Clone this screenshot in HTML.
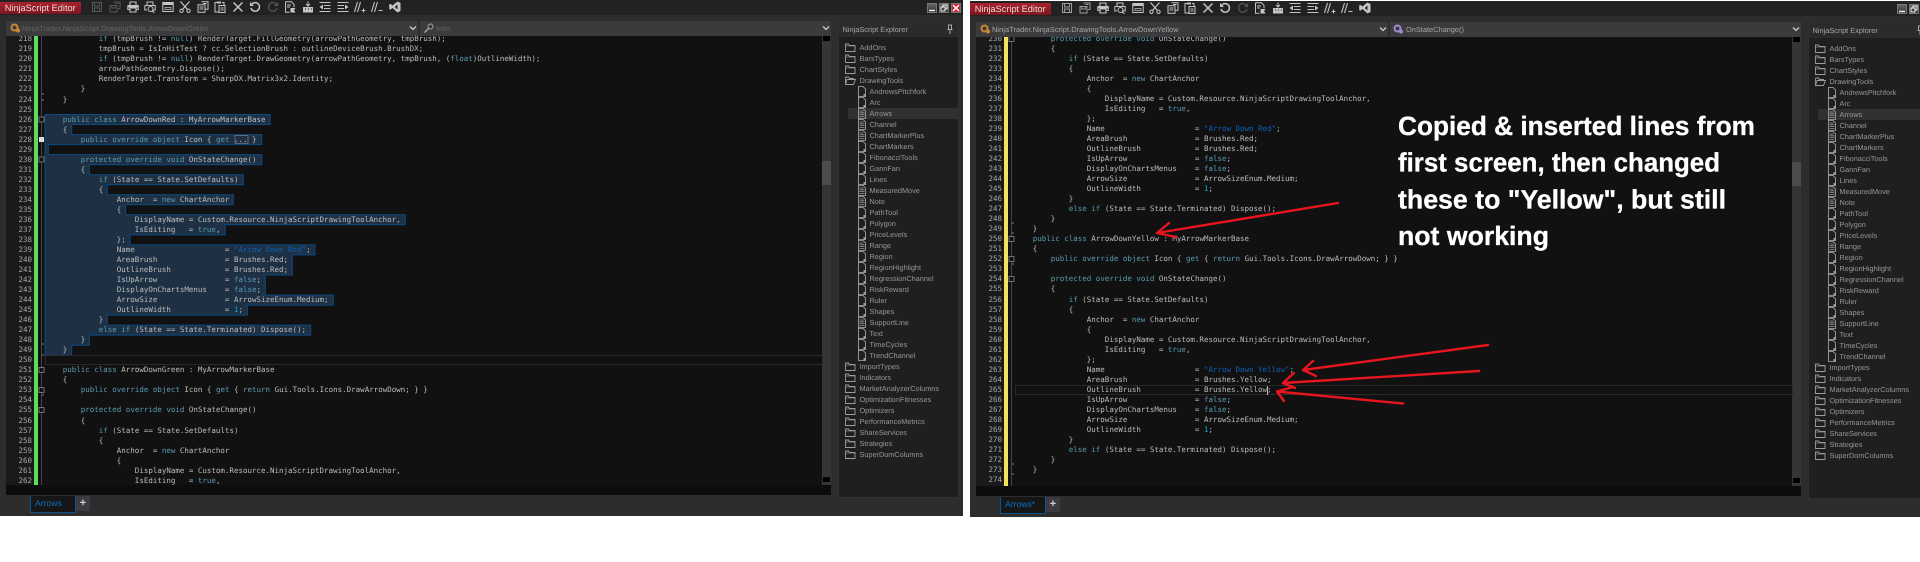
<!DOCTYPE html>
<html>
<head>
<meta charset="utf-8">
<title>NinjaScript Editor</title>
<style>
html,body{margin:0;padding:0;background:#fff;width:1920px;height:562px;overflow:hidden}
*{box-sizing:border-box}
body{position:relative;font-family:"Liberation Sans",sans-serif;text-rendering:geometricPrecision}
.win{position:absolute;width:963px;height:516px;background:#2d2d2d;overflow:hidden;filter:blur(.35px)}
.titlebar{position:absolute;left:0;top:0;width:100%;height:15px;background:#222}
.brand{position:absolute;left:0;top:2px;width:81px;height:12px;background:linear-gradient(#a8212c,#7d1620);color:#ecd9d9;font-size:9.2px;line-height:12px;padding-left:4.7px;white-space:nowrap}
.tb{position:absolute;top:1px;width:12px;height:12px;color:#c4c4c4}
.dim{color:#555}
.mid{color:#9a9a9a}
.wb{position:absolute;top:3px;width:10px;height:10px;border:1px solid #777;background:linear-gradient(#666,#333)}
.combo{position:absolute;top:21px;height:15px;background:#3b3b3d}
.combo span{position:absolute;top:0;font-size:7.4px;line-height:15px;white-space:nowrap}
.chev{position:absolute;top:4px;width:8px;height:7px}
.editor{position:absolute;left:6px;top:36px;width:825px;height:459px;background:#111;overflow:hidden}
.gutter{position:absolute;left:0;top:0;width:28px;height:449px;background:#1a1a1a}
.hbar{position:absolute;left:0;top:449px;width:825px;height:10px;background:#0c0c0c}
.vbar{position:absolute;left:816px;top:0;width:9px;height:449px;background:#353535}
.thumb{position:absolute;left:0;top:125px;width:9px;height:24px;background:#4c4c4c}
.sarrow{position:absolute;left:1px;width:7px;height:5px;background:#000}
.code,.nums{position:absolute;margin:0;font-family:"DejaVu Sans Mono","Liberation Mono",monospace;font-size:7.49px;line-height:10.03px;white-space:pre}
.code{color:#bdbdbd;left:38.7px}
.nums{color:#a8a8a8;left:12px;width:14px;text-align:right}
.bar{position:absolute;left:28px;top:0;width:4px;height:449px}
.k{color:#5b9bb2}
.s{color:#0d62ba}
.n{color:#08a4d8}
.fold{position:absolute;left:0;top:0}
.tabs{position:absolute;left:30px;top:496px;width:46px;height:17px;background:#161616;border:1px solid #0a558f;border-top:0;color:#0a6fc4;font-size:8.6px;line-height:15px;padding-left:4px}
.plus{position:absolute;left:76px;top:496px;width:14px;height:15px;background:#3b3b41;color:#d0d0d0;font-size:11px;font-weight:bold;line-height:14px;text-align:center}
.exp{position:absolute;left:838px;top:20px;width:120.5px;height:478px;background:#1f1f1f;border:1px solid #303030;overflow:hidden}
.exph{position:absolute;left:0;top:0;width:100%;height:16px;background:#2b2b2b;color:#a8a8a8;font-size:7.4px;line-height:17px;padding-left:3.5px}
.tree{position:absolute;left:0;top:20.5px;width:100%}
.r{position:relative;height:11.03px;font-size:7.3px;line-height:11px;color:#989898;white-space:nowrap}
.r svg{position:absolute;top:0;width:11px;height:11px;color:#9c9c9c}
.r b{position:absolute;font-weight:normal}
.f svg{left:6px}.f b{left:20.5px}
.d svg{left:18px}.d b{left:30.5px}
.sel{background:#303030;margin-left:9px}
.sel svg{left:9px}.sel b{left:21.5px}
.overlay{position:absolute;left:0;top:0}
</style>
</head>
<body>
<svg width="0" height="0" style="position:absolute">
<defs>
<symbol id="i-save" viewBox="0 0 12 12"><path d="M1.500 1.500h9v9h-9zM3.500 1.500v3.500h5v-3.500M3.500 10.500v-3.500h5v3.500" fill="none" stroke="currentColor"/></symbol>
<symbol id="i-saveall" viewBox="0 0 12 12"><path d="M4.500 1h6.500v6.500h-2M1 4.500h7v6.500h-7zM2.800 4.500v2.500h3.500v-2.500M6.500 2.500h3" fill="none" stroke="currentColor"/></symbol>
<symbol id="i-print" viewBox="0 0 12 12"><path d="M3 4v-3h6v3M.8 4.500h10.400v4h-2.200M3 8.500h-2.200v-4M3 7h6v4h-6z" fill="none" stroke="currentColor" stroke-width="1.100"/><path d="M1 5h10v1.500h-10z" fill="currentColor"/></symbol>
<symbol id="i-prev" viewBox="0 0 12 12"><path d="M3 4v-3h6v3M.8 4.500h10.400v4.500h-3M3 9h-2.200v-4.500" fill="none" stroke="currentColor"/><circle cx="6.500" cy="8" r="2.500" fill="none" stroke="currentColor"/><path d="M8.300 9.800l2 2" stroke="currentColor" stroke-width="1.200"/></symbol>
<symbol id="i-win" viewBox="0 0 12 12"><path d="M.8 1.500h10.400v9h-10.400z" fill="none" stroke="currentColor"/><path d="M1 2h10v2h-10z" fill="currentColor"/><path d="M3 6.500h6v2h-6z" fill="none" stroke="currentColor" stroke-width=".7"/></symbol>
<symbol id="i-cut" viewBox="0 0 12 12"><path d="M1.500 .5l7 8M10.500 .5l-7 8" fill="none" stroke="currentColor" stroke-width="1.200"/><circle cx="2.500" cy="9.800" r="1.700" fill="none" stroke="currentColor"/><circle cx="9.500" cy="9.800" r="1.700" fill="none" stroke="currentColor"/></symbol>
<symbol id="i-copy" viewBox="0 0 12 12"><path d="M4.500 .8h6.500v7.500h-2.500M1 3.800h7v7.500h-7z" fill="none" stroke="currentColor"/><path d="M2.500 6h4M2.500 8h4M6 2.500h3.500" stroke="currentColor"/></symbol>
<symbol id="i-paste" viewBox="0 0 12 12"><path d="M4 1.500h-3v9.500h3.500M8 1.500h2v3M5 4.500h6v7h-6z" fill="none" stroke="currentColor"/><path d="M3 .5h4v2h-4z" fill="currentColor"/><path d="M6.500 7h3M6.500 9h3" stroke="currentColor"/></symbol>
<symbol id="i-x" viewBox="0 0 12 12"><path d="M1.500 1.500l9 9M10.500 1.500l-9 9" stroke="currentColor" stroke-width="1.500"/></symbol>
<symbol id="i-undo" viewBox="0 0 12 12"><path d="M3 3a4.300 4.300 0 1 1-1 4" fill="none" stroke="currentColor" stroke-width="1.500"/><path d="M1 1v4h4z" fill="currentColor"/></symbol>
<symbol id="i-redo" viewBox="0 0 12 12"><path d="M9 3a4.300 4.300 0 1 0 1 4" fill="none" stroke="currentColor" stroke-width="1.200"/><path d="M11 1v4h-4z" fill="currentColor"/></symbol>
<symbol id="i-snip" viewBox="0 0 12 12"><path d="M1.500 .8h6l2.500 2.500v3M1.500 .8v10.400h4" fill="none" stroke="currentColor"/><path d="M3 4h4M3 6h3" stroke="currentColor"/><path d="M6.500 7h5l-1.500 2 1.500 2.500h-5z" fill="currentColor"/></symbol>
<symbol id="i-imp" viewBox="0 0 12 12"><path d="M1 6h10v5.500h-10z" fill="currentColor"/><path d="M6 .5v4M4 3l2 2 2-2" fill="none" stroke="currentColor"/><path d="M3 8h1M6 8h1M9 8h1" stroke="#222"/></symbol>
<symbol id="i-ind" viewBox="0 0 12 12"><path d="M.5 1.500h11M5 4.500h6.500M5 7.500h6.500M.5 10.500h11" stroke="currentColor"/><path d="M4 3.500v5l-3.500-2.500z" fill="currentColor"/></symbol>
<symbol id="i-out" viewBox="0 0 12 12"><path d="M.5 1.500h11M.5 4.500h6.500M.5 7.500h6.500M.5 10.500h11" stroke="currentColor"/><path d="M8 3.500v5l3.500-2.500z" fill="currentColor"/></symbol>
<symbol id="i-com" viewBox="0 0 12 12"><path d="M3.500 1l-3 10M6.500 1l-3 10" stroke="currentColor" stroke-width="1.100"/><path d="M7.500 9.500h4M9.500 7.500v4" stroke="currentColor"/></symbol>
<symbol id="i-unc" viewBox="0 0 12 12"><path d="M3.500 1l-3 10M6.500 1l-3 10" stroke="currentColor" stroke-width="1.100"/><path d="M7.500 9.500h4" stroke="currentColor"/></symbol>
<symbol id="i-vs" viewBox="0 0 12 12"><path d="M8.500 .5l3 1.500v8l-3 1.500-5-4.500-2.300 1.700-1-.7v-4.500l1-.7 2.300 1.700zM8.500 3.500l-2.700 2.500 2.700 2.500z" fill="currentColor" fill-rule="evenodd"/></symbol>
<symbol id="i-folder" viewBox="0 0 11 11"><path d="M.5 2v7.500h9.500v-6h-5.500l-1-1.500z" fill="none" stroke="currentColor" stroke-width=".9"/><path d="M.5 4h9.500" stroke="currentColor" stroke-width=".6"/></symbol>
<symbol id="i-open" viewBox="0 0 11 11"><path d="M.5 2v7.500h8l2-5h-8.500l-1.500 5M8.500 4.500v-1h-4l-1-1.500h-3" fill="none" stroke="currentColor" stroke-width=".9"/></symbol>
<symbol id="i-page" viewBox="0 0 11 11"><path d="M1.500 .4h4.500l2.500 2.500v7.700h-7z" fill="none" stroke="currentColor" stroke-width=".9"/><path d="M6.500 8h2.500v2.500h-2.500z" fill="currentColor"/></symbol>
<symbol id="i-text" viewBox="0 0 11 11"><path d="M1.500 .4h4.500l2.500 2.500v7.700h-7z" fill="none" stroke="currentColor" stroke-width=".9"/><path d="M2.500 3h4M2.500 4.800h5M2.500 6.600h5M2.500 8.400h5" stroke="currentColor" stroke-width=".8"/></symbol>
</defs>
</svg>

<!-- LEFT WINDOW -->
<div class="win" style="left:0;top:0">
<div class="titlebar"></div>
<div class="brand">NinjaScript Editor</div>
<svg class="tb dim" style="left:91px"><use href="#i-save"/></svg>
<svg class="tb dim" style="left:109px"><use href="#i-saveall"/></svg>
<svg class="tb" style="left:126.500px"><use href="#i-print"/></svg>
<svg class="tb" style="left:144px"><use href="#i-prev"/></svg>
<svg class="tb" style="left:162px"><use href="#i-win"/></svg>
<svg class="tb" style="left:179px"><use href="#i-cut"/></svg>
<svg class="tb" style="left:197px"><use href="#i-copy"/></svg>
<svg class="tb" style="left:214px"><use href="#i-paste"/></svg>
<svg class="tb" style="left:232px"><use href="#i-x"/></svg>
<svg class="tb" style="left:249px"><use href="#i-undo"/></svg>
<svg class="tb dim" style="left:267px"><use href="#i-redo"/></svg>
<svg class="tb" style="left:284px"><use href="#i-snip"/></svg>
<svg class="tb" style="left:302px"><use href="#i-imp"/></svg>
<svg class="tb" style="left:319px"><use href="#i-ind"/></svg>
<svg class="tb" style="left:337px"><use href="#i-out"/></svg>
<svg class="tb" style="left:354px"><use href="#i-com"/></svg>
<svg class="tb" style="left:371px"><use href="#i-unc"/></svg>
<svg class="tb" style="left:389px"><use href="#i-vs"/></svg>
<div class="wb" style="left:926.500px"><svg width="8" height="8" style="display:block"><path d="M1 6.500h6" stroke="#eee" stroke-width="1.500"/></svg></div>
<div class="wb" style="left:938.500px"><svg width="8" height="8" style="display:block"><path d="M1 3h4v4h-4zM3 3v-2h4v4h-2" fill="none" stroke="#eee"/></svg></div>
<div class="wb" style="left:950.500px;background:#c8262e"><svg width="8" height="8" style="display:block"><path d="M1 1l6 6M7 1l-6 6" stroke="#fff" stroke-width="1.500"/></svg></div>

<div class="combo" style="left:6px;width:412px">
<svg style="position:absolute;left:4px;top:2px" width="11" height="11"><circle cx="4.500" cy="4.500" r="3" fill="none" stroke="#c98a32" stroke-width="2"/><circle cx="8" cy="7.500" r="2" fill="#c98a32"/></svg>
<span style="left:16px;color:#666;letter-spacing:.06px">NinjaTrader.NinjaScript.DrawingTools.ArrowDownGreen</span>
<svg class="chev" style="left:403px"><path d="M1 1.500l3 3 3-3" fill="none" stroke="#ccc" stroke-width="1.300"/></svg>
</div>
<div class="combo" style="left:420px;width:411px">
<svg style="position:absolute;left:3px;top:2px" width="11" height="11"><circle cx="7.500" cy="3.500" r="2.500" fill="none" stroke="#aaa"/><path d="M5.500 5.500l-4 4" stroke="#aaa" stroke-width="1.300"/></svg>
<span style="left:16px;color:#666">Icon</span>
<svg class="chev" style="left:402px"><path d="M1 1.500l3 3 3-3" fill="none" stroke="#ccc" stroke-width="1.300"/></svg>
</div>

<div class="editor">
<div class="gutter"></div>
<div class="bar" style="background:#5fdc5a"></div>
<div class="vbar"><div class="thumb"></div><div class="sarrow" style="top:0"></div><div class="sarrow" style="top:441px"></div></div>
<div class="hbar"></div>
<svg class="fold" style="left:-6px;top:-36px;overflow:visible;height:485px;width:831px">
<path d="M41.500 36v449" stroke="#444" stroke-width="1"/>
<polygon points="45,114.500 270,114.500 270,124.500 71.700,124.500 71.700,134.600 261.700,134.600 261.700,144.600 48.300,144.600 48.300,154.600 261.700,154.600 261.700,164.700 89.300,164.700 89.300,174.700 243.300,174.700 243.300,184.700 107.300,184.700 107.300,194.700 233.300,194.700 233.300,204.800 125.700,204.800 125.700,214.800 405.300,214.800 405.300,224.800 225,224.800 225,234.900 130,234.900 130,244.900 315,244.900 315,254.900 292.300,254.900 292.300,275 265.300,275 265.300,295 333.300,295 333.300,305.100 247.300,305.100 247.300,315.100 107.300,315.100 107.300,325.100 310.700,325.100 310.700,335.100 89.300,335.100 89.300,345.200 71.700,345.200 71.700,355.200 45,355.200" fill="#1e3044" stroke="#0c4a82" stroke-width="1"/>
<rect x="45.500" y="355.500" width="777" height="9" fill="none" stroke="#2a2a2a"/>
<rect x="235" y="135.500" width="13" height="8" fill="none" stroke="#667"/>
<g fill="#111" stroke="#888" stroke-width=".8">
<rect x="39" y="117" width="5" height="5"/><rect x="39" y="157" width="5" height="5"/>
<rect x="39" y="367.500" width="5" height="5"/><rect x="39" y="387.500" width="5" height="5"/><rect x="39" y="407.500" width="5" height="5"/>
</g>
<rect x="39" y="137" width="5" height="5" fill="#ddd"/>
<path d="M41.500 94h2.500M41.500 100h2.500M41.500 344h2.500M41.500 355h2.500M41.500 395h2.500" stroke="#777"/>
</svg>
<pre class="nums" style="top:-1.700px">218
219
220
221
222
223
224
225
226
227
228
229
230
231
232
233
234
235
236
237
238
239
240
241
242
243
244
245
246
247
248
249
250
251
252
253
254
255
256
257
258
259
260
261
262</pre>
<pre class="code" style="top:-1.700px">            <span class="k">if</span> (tmpBrush != <span class="k">null</span>) RenderTarget.FillGeometry(arrowPathGeometry, tmpBrush);
            tmpBrush = IsInHitTest ? cc.SelectionBrush : outlineDeviceBrush.BrushDX;
            <span class="k">if</span> (tmpBrush != <span class="k">null</span>) RenderTarget.DrawGeometry(arrowPathGeometry, tmpBrush, (<span class="k">float</span>)OutlineWidth);
            arrowPathGeometry.Dispose();
            RenderTarget.Transform = SharpDX.Matrix3x2.Identity;
        }
    }

    <span class="k">public class</span> ArrowDownRed : MyArrowMarkerBase
    {
        <span class="k">public override object</span> Icon { <span class="k">get</span> ... }

        <span class="k">protected override void</span> OnStateChange()
        {
            <span class="k">if</span> (State == State.SetDefaults)
            {
                Anchor  = <span class="k">new</span> ChartAnchor
                {
                    DisplayName = Custom.Resource.NinjaScriptDrawingToolAnchor,
                    IsEditing   = <span class="k">true</span>,
                };
                Name                    = <span class="s">"Arrow Down Red"</span>;
                AreaBrush               = Brushes.Red;
                OutlineBrush            = Brushes.Red;
                IsUpArrow               = <span class="k">false</span>;
                DisplayOnChartsMenus    = <span class="k">false</span>;
                ArrowSize               = ArrowSizeEnum.Medium;
                OutlineWidth            = <span class="n">1</span>;
            }
            <span class="k">else if</span> (State == State.Terminated) Dispose();
        }
    }

    <span class="k">public class</span> ArrowDownGreen : MyArrowMarkerBase
    {
        <span class="k">public override object</span> Icon { <span class="k">get</span> { <span class="k">return</span> Gui.Tools.Icons.DrawArrowDown; } }

        <span class="k">protected override void</span> OnStateChange()
        {
            <span class="k">if</span> (State == State.SetDefaults)
            {
                Anchor  = <span class="k">new</span> ChartAnchor
                {
                    DisplayName = Custom.Resource.NinjaScriptDrawingToolAnchor,
                    IsEditing   = <span class="k">true</span>,</pre>
</div>

<div class="tabs">Arrows</div>
<div class="plus">+</div>

<div class="exp">
<div class="exph">NinjaScript Explorer</div>
<svg style="position:absolute;left:107px;top:3px" width="8" height="11"><path d="M2.500 1h3v4.500h-3zM1.500 5.500h5M4 5.500v4.500" fill="none" stroke="#aaa"/></svg>
<div class="tree">
<div class="r f"><svg><use href="#i-folder"/></svg><b>AddOns</b></div>
<div class="r f"><svg><use href="#i-folder"/></svg><b>BarsTypes</b></div>
<div class="r f"><svg><use href="#i-folder"/></svg><b>ChartStyles</b></div>
<div class="r f"><svg><use href="#i-open"/></svg><b>DrawingTools</b></div>
<div class="r d"><svg><use href="#i-page"/></svg><b>AndrewsPitchfork</b></div>
<div class="r d"><svg><use href="#i-page"/></svg><b>Arc</b></div>
<div class="r sel"><svg><use href="#i-text"/></svg><b>Arrows</b></div>
<div class="r d"><svg><use href="#i-text"/></svg><b>Channel</b></div>
<div class="r d"><svg><use href="#i-text"/></svg><b>ChartMarkerPlus</b></div>
<div class="r d"><svg><use href="#i-page"/></svg><b>ChartMarkers</b></div>
<div class="r d"><svg><use href="#i-page"/></svg><b>FibonacciTools</b></div>
<div class="r d"><svg><use href="#i-page"/></svg><b>GannFan</b></div>
<div class="r d"><svg><use href="#i-page"/></svg><b>Lines</b></div>
<div class="r d"><svg><use href="#i-text"/></svg><b>MeasuredMove</b></div>
<div class="r d"><svg><use href="#i-text"/></svg><b>Note</b></div>
<div class="r d"><svg><use href="#i-page"/></svg><b>PathTool</b></div>
<div class="r d"><svg><use href="#i-page"/></svg><b>Polygon</b></div>
<div class="r d"><svg><use href="#i-page"/></svg><b>PriceLevels</b></div>
<div class="r d"><svg><use href="#i-text"/></svg><b>Range</b></div>
<div class="r d"><svg><use href="#i-page"/></svg><b>Region</b></div>
<div class="r d"><svg><use href="#i-page"/></svg><b>RegionHighlight</b></div>
<div class="r d"><svg><use href="#i-page"/></svg><b>RegressionChannel</b></div>
<div class="r d"><svg><use href="#i-page"/></svg><b>RiskReward</b></div>
<div class="r d"><svg><use href="#i-page"/></svg><b>Ruler</b></div>
<div class="r d"><svg><use href="#i-page"/></svg><b>Shapes</b></div>
<div class="r d"><svg><use href="#i-text"/></svg><b>SupportLine</b></div>
<div class="r d"><svg><use href="#i-page"/></svg><b>Text</b></div>
<div class="r d"><svg><use href="#i-page"/></svg><b>TimeCycles</b></div>
<div class="r d"><svg><use href="#i-page"/></svg><b>TrendChannel</b></div>
<div class="r f"><svg><use href="#i-folder"/></svg><b>ImportTypes</b></div>
<div class="r f"><svg><use href="#i-folder"/></svg><b>Indicators</b></div>
<div class="r f"><svg><use href="#i-folder"/></svg><b>MarketAnalyzerColumns</b></div>
<div class="r f"><svg><use href="#i-folder"/></svg><b>OptimizationFitnesses</b></div>
<div class="r f"><svg><use href="#i-folder"/></svg><b>Optimizers</b></div>
<div class="r f"><svg><use href="#i-folder"/></svg><b>PerformanceMetrics</b></div>
<div class="r f"><svg><use href="#i-folder"/></svg><b>ShareServices</b></div>
<div class="r f"><svg><use href="#i-folder"/></svg><b>Strategies</b></div>
<div class="r f"><svg><use href="#i-folder"/></svg><b>SuperDomColumns</b></div>
</div>
</div>
</div>

<!-- RIGHT WINDOW -->
<div class="win" style="left:970px;top:1px">
<div class="titlebar"></div>
<div class="brand">NinjaScript Editor</div>
<svg class="tb mid" style="left:91px"><use href="#i-save"/></svg>
<svg class="tb mid" style="left:109px"><use href="#i-saveall"/></svg>
<svg class="tb" style="left:126.500px"><use href="#i-print"/></svg>
<svg class="tb" style="left:144px"><use href="#i-prev"/></svg>
<svg class="tb" style="left:162px"><use href="#i-win"/></svg>
<svg class="tb" style="left:179px"><use href="#i-cut"/></svg>
<svg class="tb" style="left:197px"><use href="#i-copy"/></svg>
<svg class="tb" style="left:214px"><use href="#i-paste"/></svg>
<svg class="tb" style="left:232px"><use href="#i-x"/></svg>
<svg class="tb" style="left:249px"><use href="#i-undo"/></svg>
<svg class="tb dim" style="left:267px"><use href="#i-redo"/></svg>
<svg class="tb" style="left:284px"><use href="#i-snip"/></svg>
<svg class="tb" style="left:302px"><use href="#i-imp"/></svg>
<svg class="tb" style="left:319px"><use href="#i-ind"/></svg>
<svg class="tb" style="left:337px"><use href="#i-out"/></svg>
<svg class="tb" style="left:354px"><use href="#i-com"/></svg>
<svg class="tb" style="left:371px"><use href="#i-unc"/></svg>
<svg class="tb" style="left:389px"><use href="#i-vs"/></svg>
<div class="wb" style="left:926.500px"><svg width="8" height="8" style="display:block"><path d="M1 6.500h6" stroke="#eee" stroke-width="1.500"/></svg></div>
<div class="wb" style="left:938.500px"><svg width="8" height="8" style="display:block"><path d="M1 3h4v4h-4zM3 3v-2h4v4h-2" fill="none" stroke="#eee"/></svg></div>

<div class="combo" style="left:6px;width:412px">
<svg style="position:absolute;left:4px;top:2px" width="11" height="11"><circle cx="4.500" cy="4.500" r="3" fill="none" stroke="#c98a32" stroke-width="2"/><circle cx="8" cy="7.500" r="2" fill="#c98a32"/></svg>
<span style="left:16px;color:#a8a8a8;letter-spacing:.06px">NinjaTrader.NinjaScript.DrawingTools.ArrowDownYellow</span>
<svg class="chev" style="left:403px"><path d="M1 1.500l3 3 3-3" fill="none" stroke="#ccc" stroke-width="1.300"/></svg>
</div>
<div class="combo" style="left:420px;width:411px">
<svg style="position:absolute;left:3px;top:2px" width="11" height="11"><circle cx="4.500" cy="4.500" r="3" fill="none" stroke="#a08ad0" stroke-width="2"/><circle cx="8" cy="7.500" r="2" fill="#a08ad0"/></svg>
<span style="left:16px;color:#a8a8a8">OnStateChange()</span>
<svg class="chev" style="left:402px"><path d="M1 1.500l3 3 3-3" fill="none" stroke="#ccc" stroke-width="1.300"/></svg>
</div>

<div class="editor">
<div class="gutter"></div>
<div class="bar" style="background:#f2e35a"></div>
<div class="vbar"><div class="thumb"></div><div class="sarrow" style="top:0"></div><div class="sarrow" style="top:441px"></div></div>
<div class="hbar"></div>
<svg class="fold" style="left:-6px;top:-36px;overflow:visible;height:485px;width:831px">
<path d="M41.500 36v449" stroke="#444"/>
<rect x="45.500" y="384.500" width="777" height="9" fill="none" stroke="#2a2a2a"/>
<path d="M297.500 385v9" stroke="#ddd" stroke-width=".8"/>
<g fill="#111" stroke="#888" stroke-width=".8">
<rect x="39" y="35.500" width="5" height="5"/><rect x="39" y="235.500" width="5" height="5"/><rect x="39" y="255.500" width="5" height="5"/><rect x="39" y="275.500" width="5" height="5"/>
</g>
<path d="M41.500 222h2.500M41.500 232h2.500M41.500 263h2.500M41.500 463h2.500M41.500 473h2.500" stroke="#777"/>
</svg>
<pre class="nums" style="top:-3.300px">230
231
232
233
234
235
236
237
238
239
240
241
242
243
244
245
246
247
248
249
250
251
252
253
254
255
256
257
258
259
260
261
262
263
264
265
266
267
268
269
270
271
272
273
274</pre>
<pre class="code" style="top:-3.300px">        <span class="k">protected override void</span> OnStateChange()
        {
            <span class="k">if</span> (State == State.SetDefaults)
            {
                Anchor  = <span class="k">new</span> ChartAnchor
                {
                    DisplayName = Custom.Resource.NinjaScriptDrawingToolAnchor,
                    IsEditing   = <span class="k">true</span>,
                };
                Name                    = <span class="s">"Arrow Down Red"</span>;
                AreaBrush               = Brushes.Red;
                OutlineBrush            = Brushes.Red;
                IsUpArrow               = <span class="k">false</span>;
                DisplayOnChartsMenus    = <span class="k">false</span>;
                ArrowSize               = ArrowSizeEnum.Medium;
                OutlineWidth            = <span class="n">1</span>;
            }
            <span class="k">else if</span> (State == State.Terminated) Dispose();
        }
    }
    <span class="k">public class</span> ArrowDownYellow : MyArrowMarkerBase
    {
        <span class="k">public override object</span> Icon { <span class="k">get</span> { <span class="k">return</span> Gui.Tools.Icons.DrawArrowDown; } }

        <span class="k">protected override void</span> OnStateChange()
        {
            <span class="k">if</span> (State == State.SetDefaults)
            {
                Anchor  = <span class="k">new</span> ChartAnchor
                {
                    DisplayName = Custom.Resource.NinjaScriptDrawingToolAnchor,
                    IsEditing   = <span class="k">true</span>,
                };
                Name                    = <span class="s">"Arrow Down Yellow"</span>;
                AreaBrush               = Brushes.Yellow;
                OutlineBrush            = Brushes.Yellow;
                IsUpArrow               = <span class="k">false</span>;
                DisplayOnChartsMenus    = <span class="k">false</span>;
                ArrowSize               = ArrowSizeEnum.Medium;
                OutlineWidth            = <span class="n">1</span>;
            }
            <span class="k">else if</span> (State == State.Terminated) Dispose();
        }
    }</pre>
</div>

<div class="tabs">Arrows*</div>
<div class="plus">+</div>

<div class="exp">
<div class="exph">NinjaScript Explorer</div>
<svg style="position:absolute;left:107px;top:3px" width="8" height="11"><path d="M2.500 1h3v4.500h-3zM1.500 5.500h5M4 5.500v4.500" fill="none" stroke="#aaa"/></svg>
<div class="tree">
<div class="r f"><svg><use href="#i-folder"/></svg><b>AddOns</b></div>
<div class="r f"><svg><use href="#i-folder"/></svg><b>BarsTypes</b></div>
<div class="r f"><svg><use href="#i-folder"/></svg><b>ChartStyles</b></div>
<div class="r f"><svg><use href="#i-open"/></svg><b>DrawingTools</b></div>
<div class="r d"><svg><use href="#i-page"/></svg><b>AndrewsPitchfork</b></div>
<div class="r d"><svg><use href="#i-page"/></svg><b>Arc</b></div>
<div class="r sel"><svg><use href="#i-text"/></svg><b>Arrows</b></div>
<div class="r d"><svg><use href="#i-text"/></svg><b>Channel</b></div>
<div class="r d"><svg><use href="#i-text"/></svg><b>ChartMarkerPlus</b></div>
<div class="r d"><svg><use href="#i-page"/></svg><b>ChartMarkers</b></div>
<div class="r d"><svg><use href="#i-page"/></svg><b>FibonacciTools</b></div>
<div class="r d"><svg><use href="#i-page"/></svg><b>GannFan</b></div>
<div class="r d"><svg><use href="#i-page"/></svg><b>Lines</b></div>
<div class="r d"><svg><use href="#i-text"/></svg><b>MeasuredMove</b></div>
<div class="r d"><svg><use href="#i-text"/></svg><b>Note</b></div>
<div class="r d"><svg><use href="#i-page"/></svg><b>PathTool</b></div>
<div class="r d"><svg><use href="#i-page"/></svg><b>Polygon</b></div>
<div class="r d"><svg><use href="#i-page"/></svg><b>PriceLevels</b></div>
<div class="r d"><svg><use href="#i-text"/></svg><b>Range</b></div>
<div class="r d"><svg><use href="#i-page"/></svg><b>Region</b></div>
<div class="r d"><svg><use href="#i-page"/></svg><b>RegionHighlight</b></div>
<div class="r d"><svg><use href="#i-page"/></svg><b>RegressionChannel</b></div>
<div class="r d"><svg><use href="#i-page"/></svg><b>RiskReward</b></div>
<div class="r d"><svg><use href="#i-page"/></svg><b>Ruler</b></div>
<div class="r d"><svg><use href="#i-page"/></svg><b>Shapes</b></div>
<div class="r d"><svg><use href="#i-text"/></svg><b>SupportLine</b></div>
<div class="r d"><svg><use href="#i-page"/></svg><b>Text</b></div>
<div class="r d"><svg><use href="#i-page"/></svg><b>TimeCycles</b></div>
<div class="r d"><svg><use href="#i-page"/></svg><b>TrendChannel</b></div>
<div class="r f"><svg><use href="#i-folder"/></svg><b>ImportTypes</b></div>
<div class="r f"><svg><use href="#i-folder"/></svg><b>Indicators</b></div>
<div class="r f"><svg><use href="#i-folder"/></svg><b>MarketAnalyzerColumns</b></div>
<div class="r f"><svg><use href="#i-folder"/></svg><b>OptimizationFitnesses</b></div>
<div class="r f"><svg><use href="#i-folder"/></svg><b>Optimizers</b></div>
<div class="r f"><svg><use href="#i-folder"/></svg><b>PerformanceMetrics</b></div>
<div class="r f"><svg><use href="#i-folder"/></svg><b>ShareServices</b></div>
<div class="r f"><svg><use href="#i-folder"/></svg><b>Strategies</b></div>
<div class="r f"><svg><use href="#i-folder"/></svg><b>SuperDomColumns</b></div>
</div>
</div>
</div>

<!-- ANNOTATIONS -->
<svg class="overlay" width="1920" height="562">
<g font-family="'Liberation Sans',sans-serif" font-weight="bold" font-size="26.500" fill="#fff" stroke="#fff" stroke-width=".3">
<text x="1398" y="135" textLength="357" lengthAdjust="spacingAndGlyphs">Copied &amp; inserted lines from</text>
<text x="1398" y="171.700" textLength="322" lengthAdjust="spacingAndGlyphs">first screen, then changed</text>
<text x="1398" y="208.300" textLength="328" lengthAdjust="spacingAndGlyphs">these to "Yellow", but still</text>
<text x="1398" y="245" textLength="151" lengthAdjust="spacingAndGlyphs">not working</text>
</g>
<g fill="none" stroke="#e8141e" stroke-width="2.400" stroke-linecap="round" stroke-linejoin="round">
<path d="M1338 203L1157 233M1169 223L1157 233L1176 237"/>
<path d="M1488 345L1303 370M1313 361L1303 370L1316 376"/>
<path d="M1479 371L1283 383M1294 373L1283 383L1295 388"/>
<path d="M1403 403.500L1277 391.500M1293 387L1277 391.500L1284 401"/>
</g>
</svg>
</body>
</html>
